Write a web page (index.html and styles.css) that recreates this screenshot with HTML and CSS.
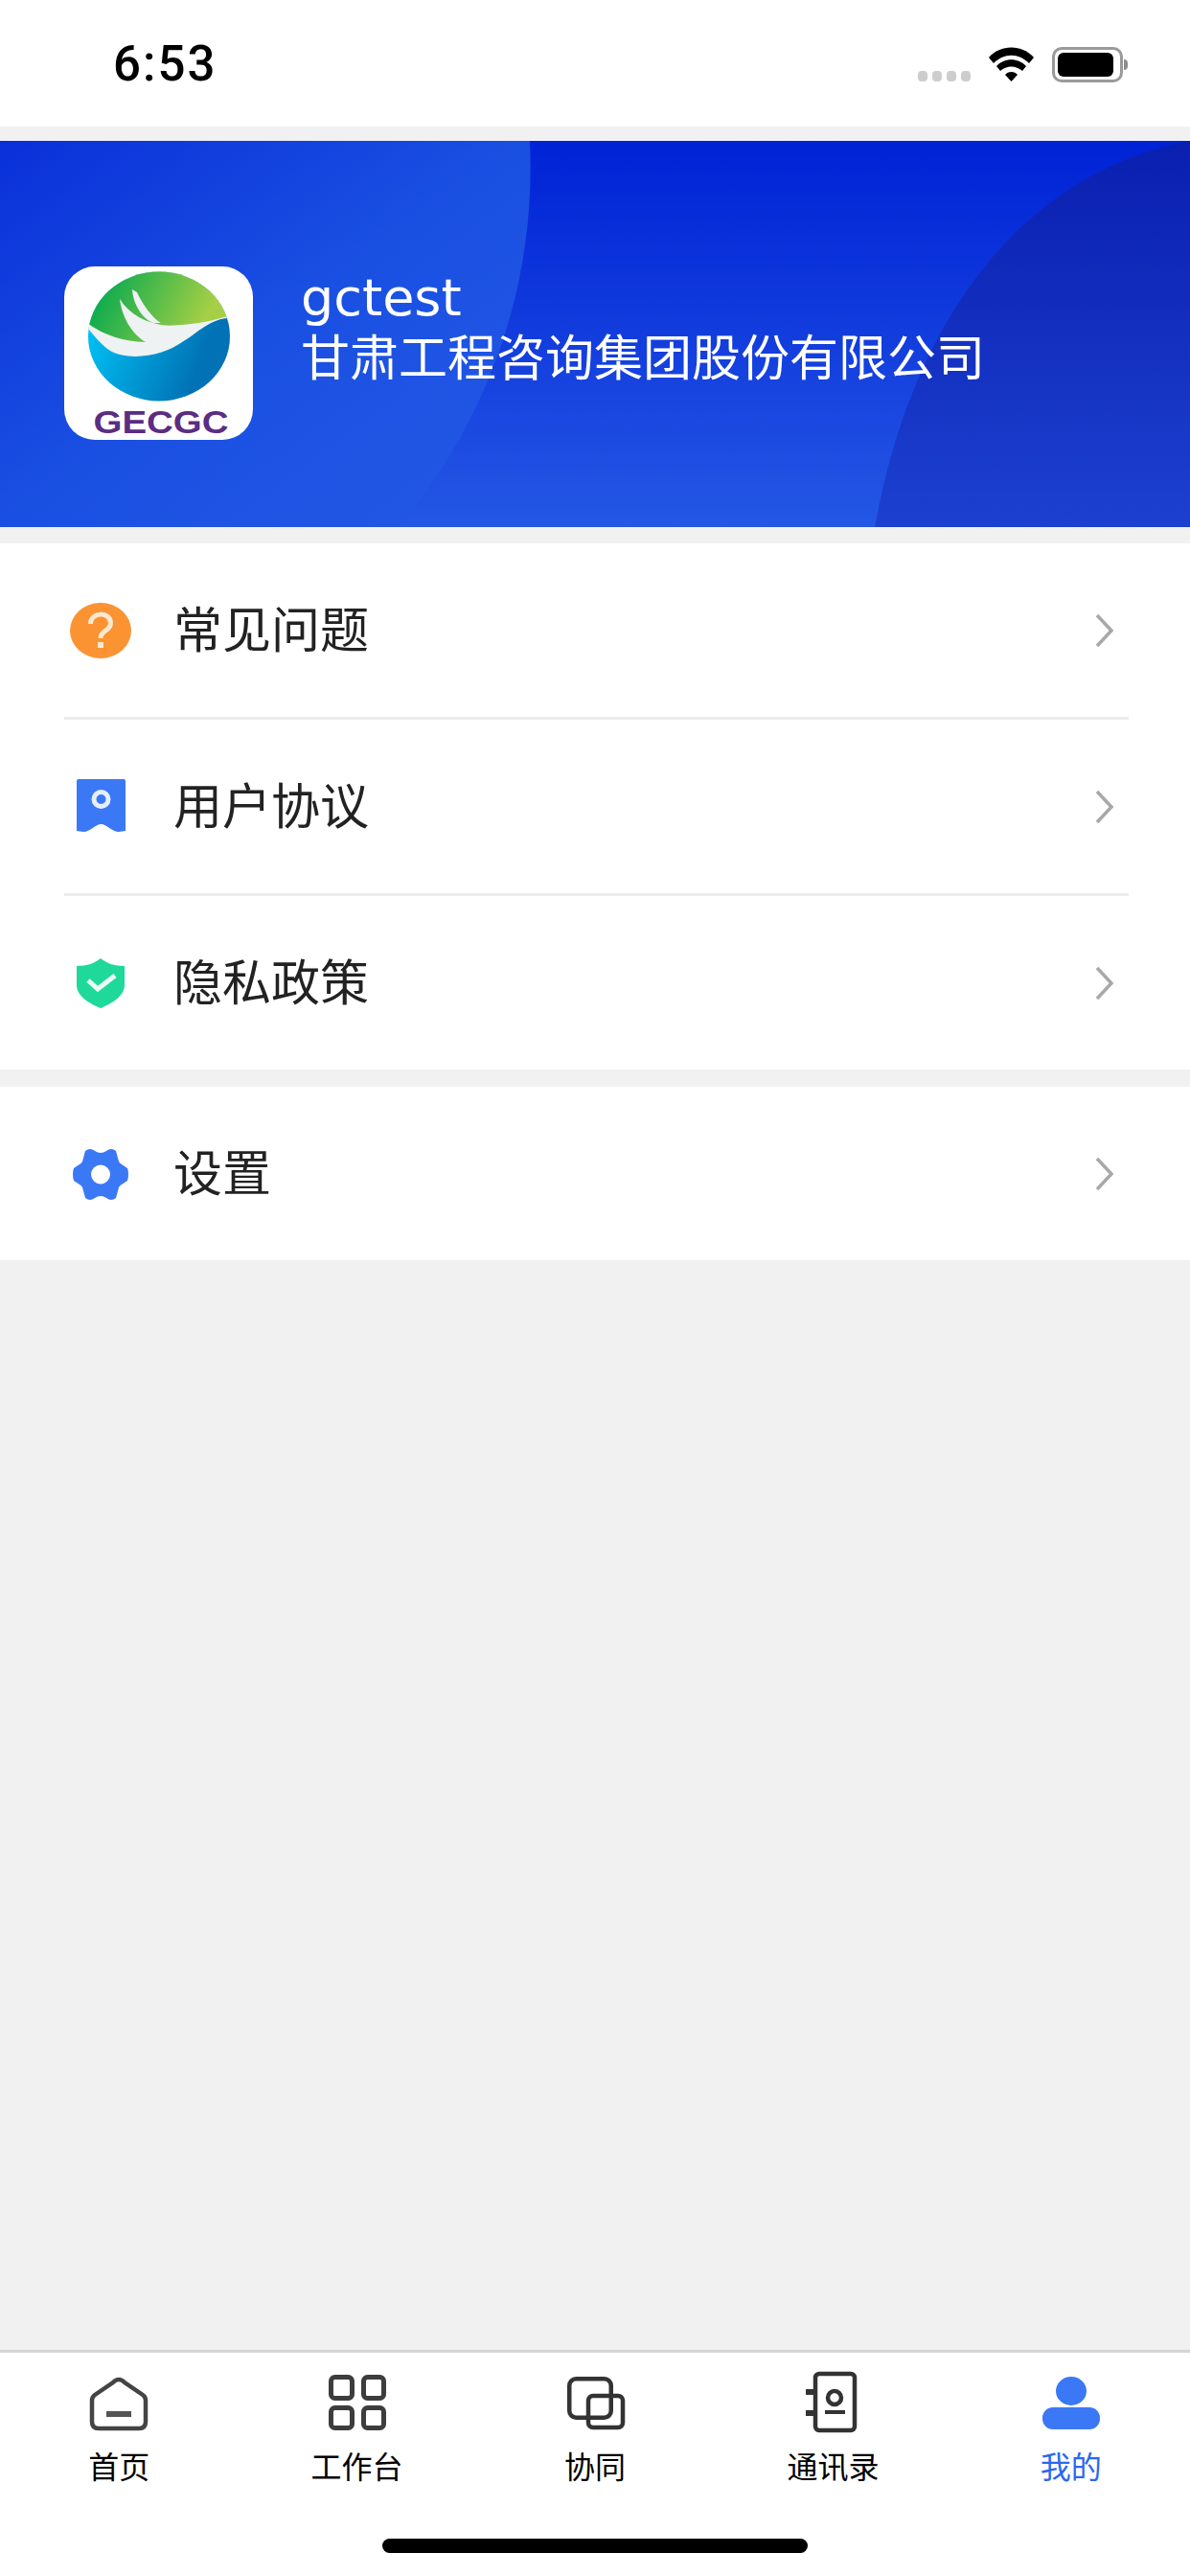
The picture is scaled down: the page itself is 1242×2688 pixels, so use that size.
FILE: index.html
```html
<!DOCTYPE html>
<html lang="zh-CN">
<head>
    <meta charset="UTF-8">
    <meta name="viewport" content="width=device-width, initial-scale=1.0">
    <title>我的</title>
    <link rel="stylesheet" href="styles.css">
</head>
<body>
    <div class="app">
        <!-- Status bar -->
        <div class="status-bar">
            <span class="status-time">6:53</span>
            <div class="status-icons">
                <div class="signal-dots"><i></i><i></i><i></i><i></i></div>
                <svg class="wifi-icon" width="47" height="36" viewBox="0 0 47 36">
                    <path d="M23.500 36 L17 29 C20 25 27 25 30 29 Z" fill="#000"/>
                    <path d="M8 20 C16 11 31 11 39 20 L35 25 C28 19 19 19 12 25 Z" fill="#000"/>
                    <path d="M0 11 C12 -3 35 -3 47 11 L42 17 C31 6 16 6 5 17 Z" fill="#000"/>
                </svg>
                <div class="battery">
                    <div class="battery-fill"></div>
                </div>
                <div class="battery-nub"></div>
            </div>
        </div>

        <!-- Profile banner -->
        <div class="banner">
            <svg class="banner-bg" width="1242" height="403" viewBox="0 0 1242 403" preserveAspectRatio="none">
                <defs>
                    <linearGradient id="bgBase" x1="0" y1="0" x2="0" y2="1">
                        <stop offset="0" stop-color="#0022d6"/>
                        <stop offset="1" stop-color="#2457e4"/>
                    </linearGradient>
                    <linearGradient id="bgLeft" x1="0" y1="0" x2="1" y2="1">
                        <stop offset="0" stop-color="#0a30d9"/>
                        <stop offset="0.5" stop-color="#1a50e2"/>
                        <stop offset="1" stop-color="#2458e5"/>
                    </linearGradient>
                    <linearGradient id="bgRight" x1="0" y1="0" x2="0" y2="1">
                        <stop offset="0" stop-color="#0a1fb0"/>
                        <stop offset="1" stop-color="#1c40d0"/>
                    </linearGradient>
                </defs>
                <rect width="1242" height="403" fill="url(#bgBase)"/>
                <path d="M0 0 H553 C560 150 510 290 416 403 H0 Z" fill="url(#bgLeft)"/>
                <path d="M1242 0 C1080 30 955 170 913 403 H1242 Z" fill="url(#bgRight)"/>
            </svg>
            <div class="logo">
                <svg width="197" height="181" viewBox="0 0 197 181">
                    <defs>
                        <clipPath id="logoClip"><ellipse cx="99" cy="73" rx="74" ry="67.500"/></clipPath>
                        <linearGradient id="logoGreen" x1="0" y1="0" x2="1" y2="0.200">
                            <stop offset="0.2" stop-color="#00a84f"/>
                            <stop offset="0.85" stop-color="#a5cf45"/>
                        </linearGradient>
                        <linearGradient id="logoBlue" x1="0" y1="0" x2="1" y2="0.300">
                            <stop offset="0.25" stop-color="#00bff2"/>
                            <stop offset="0.85" stop-color="#0072b5"/>
                        </linearGradient>
                    </defs>
                    <g clip-path="url(#logoClip)">
                        <rect width="197" height="150" fill="url(#logoBlue)"/>
                        <path d="M0 0 H197 V50 L170 54 C150 56 136 72 123 79 C105 92 70 100 48 88 C36 80 30 70 20 60 L0 50 Z" fill="#eff2f3"/>
                        <path d="M0 0 H197 V48 L170 52 C145 60 120 62 95 62 L85 79 C60 78 40 72 20 56 L0 50 Z" fill="url(#logoGreen)"/>
                        <path d="M58 34 C60 52 70 70 85 79 L110 75 L110 62 C85 60 68 50 58 34 Z" fill="#eff2f3"/>
                        <path d="M71 24 C72 40 82 55 93 59 L101 59 C92 54 82 40 76 27 Z" fill="#eff2f3"/>
                    </g>
                    <text class="logo-text" x="101" y="174" text-anchor="middle" textLength="141" lengthAdjust="spacingAndGlyphs">GECGC</text>
                </svg>
            </div>
            <div class="user-info">
                <div class="user-name">gctest</div>
                <div class="company-name">甘肃工程咨询集团股份有限公司</div>
            </div>
        </div>

        <!-- Menus -->
        <div class="menu-group">
            <div class="menu-item">
                <svg class="menu-icon" width="64" height="64" viewBox="0 0 64 64">
                    <ellipse cx="32" cy="32" rx="32" ry="29" fill="#fb9333"/>
                    <path d="M21.500 25 C21.500 12 42.500 12 42.500 24 C42.500 33 32 31 32 40" fill="none" stroke="#fde8d0" stroke-width="5"/>
                    <rect x="29" y="44" width="6" height="6" fill="#fde8d0"/>
                </svg>
                <span class="menu-label">常见问题</span>
                <svg class="chevron" width="20" height="36" viewBox="0 0 20 36"><path d="M2 2 L17 18 L2 34" fill="none" stroke="#a8a8a8" stroke-width="3.500"/></svg>
            </div>
            <div class="menu-item">
                <svg class="menu-icon" width="64" height="64" viewBox="0 0 64 64">
                    <path d="M7 5 Q7 3 9 3 H56 Q58 3 58 5 V57 L51 58 C44 58 38 50 32.500 50 C27 50 21 58 14 58 L7 57 Z" fill="#3b78f5"/>
                    <circle cx="32.500" cy="24" r="7.500" fill="none" stroke="#e6eefe" stroke-width="5"/>
                </svg>
                <span class="menu-label">用户协议</span>
                <svg class="chevron" width="20" height="36" viewBox="0 0 20 36"><path d="M2 2 L17 18 L2 34" fill="none" stroke="#a8a8a8" stroke-width="3.500"/></svg>
            </div>
            <div class="menu-item">
                <svg class="menu-icon" width="64" height="64" viewBox="0 0 64 64">
                    <path d="M32 6 C38 11 46 14 57 14 V34 C57 46 42 54 32 58 C22 54 7 46 7 34 V14 C18 14 26 11 32 6 Z" fill="#1fd99a"/>
                    <path d="M19 29 L29 38 L47 24" fill="none" stroke="#eafbf5" stroke-width="5"/>
                </svg>
                <span class="menu-label">隐私政策</span>
                <svg class="chevron" width="20" height="36" viewBox="0 0 20 36"><path d="M2 2 L17 18 L2 34" fill="none" stroke="#a8a8a8" stroke-width="3.500"/></svg>
            </div>
        </div>

        <div class="menu-group">
            <div class="menu-item">
                <svg class="menu-icon" width="64" height="64" viewBox="0 0 64 64">
                    <path d="M16 8 Q21 4 26 8 Q32 12 38 8 Q43 4 48 8 L51 19 Q52 21 54 22 L60 26 Q62 32 60 39 L54 43 Q52 44 51 46 L48 57 Q43 61 38 57 Q32 53 26 57 Q21 61 16 57 L13 46 Q12 44 10 43 L4 39 Q2 32 4 26 L10 22 Q12 21 13 19 Z" fill="#3b78f5"/>
                    <circle cx="32" cy="32.500" r="10" fill="#fff"/>
                </svg>
                <span class="menu-label">设置</span>
                <svg class="chevron" width="20" height="36" viewBox="0 0 20 36"><path d="M2 2 L17 18 L2 34" fill="none" stroke="#a8a8a8" stroke-width="3.500"/></svg>
            </div>
        </div>

        <div class="spacer"></div>

        <!-- Tab bar -->
        <div class="tab-bar">
            <div class="tabs">
                <div class="tab">
                    <svg width="66" height="66" viewBox="0 0 66 66">
                        <path d="M33 7 Q36 7 39 10 L58 23 Q61 25 61 29 V51 Q61 58 54 58 H12 Q5 58 5 51 V29 Q5 25 8 23 L27 10 Q30 7 33 7 Z" fill="none" stroke="#444" stroke-width="4.500"/>
                        <rect x="20" y="40" width="26" height="6" fill="#555"/>
                    </svg>
                    <span>首页</span>
                </div>
                <div class="tab">
                    <svg width="66" height="66" viewBox="0 0 66 66">
                        <g fill="none" stroke="#3d3d3d" stroke-width="5">
                            <rect x="5.500" y="4.500" width="22" height="22" rx="4"/>
                            <rect x="39.500" y="4.500" width="21" height="22" rx="4"/>
                            <rect x="5.500" y="36.500" width="22" height="21" rx="4"/>
                            <rect x="39.500" y="36.500" width="21" height="21" rx="4"/>
                        </g>
                    </svg>
                    <span>工作台</span>
                </div>
                <div class="tab">
                    <svg width="66" height="66" viewBox="0 0 66 66">
                        <g fill="none" stroke="#333" stroke-width="4.500">
                            <rect x="6.250" y="6.250" width="43.500" height="40.500" rx="7"/>
                            <rect x="26" y="24" width="36" height="33" rx="5"/>
                        </g>
                    </svg>
                    <span>协同</span>
                </div>
                <div class="tab">
                    <svg width="66" height="66" viewBox="0 0 66 66">
                        <rect x="15" y="1" width="41" height="59" rx="4" fill="none" stroke="#333" stroke-width="4.500"/>
                        <path d="M5 20 H13 M5 42 H13" stroke="#333" stroke-width="6"/>
                        <circle cx="35" cy="26" r="7" fill="none" stroke="#333" stroke-width="4.500"/>
                        <path d="M25 41 H46" stroke="#333" stroke-width="4"/>
                    </svg>
                    <span>通讯录</span>
                </div>
                <div class="tab tab-active">
                    <svg width="66" height="66" viewBox="0 0 66 66">
                        <ellipse cx="33" cy="19" rx="16" ry="15" fill="#3b78f5"/>
                        <rect x="3" y="36" width="60" height="23" rx="11" fill="#3b78f5"/>
                    </svg>
                    <span>我的</span>
                </div>
            </div>
            <div class="home-indicator"></div>
        </div>
    </div>
</body>
</html>
```

FILE: styles.css
```css
* {
    margin: 0;
    padding: 0;
    box-sizing: border-box;
}

body {
    background: #f1f1f1;
    font-family: "Noto Sans CJK SC", "Noto Sans", sans-serif;
}

.app {
    width: 1242px;
    height: 2688px;
    display: flex;
    flex-direction: column;
    overflow: hidden;
}

/* Status bar */
.status-bar {
    height: 132px;
    background: white;
    display: flex;
    justify-content: space-between;
    padding: 36px 65px 0 118px;
}

.status-time {
    font-family: Roboto, sans-serif;
    font-weight: 500;
    font-size: 51px;
    letter-spacing: 2px;
    line-height: 62px;
    color: black;
}

.status-icons {
    display: flex;
    align-items: flex-start;
    padding-top: 13px;
}

.signal-dots {
    display: flex;
    gap: 5px;
    margin: 25px 19px 0 0;
}

.signal-dots i {
    width: 10px;
    height: 11px;
    border-radius: 4px;
    background: #cdcdcd;
}

.battery {
    width: 74px;
    height: 37px;
    margin-left: 19px;
    padding: 3px 7px 3px 3px;
    border: 3px solid #9a9a9a;
    border-radius: 10px;
}

.battery-fill {
    height: 100%;
    background: black;
    border-radius: 6px;
}

.battery-nub {
    width: 4px;
    height: 11px;
    margin-top: 13px;
    margin-left: 1px;
    background: #8c8c8c;
    border-radius: 0 5px 5px 0;
}

/* Banner */
.banner {
    position: relative;
    height: 403px;
    margin-top: 15px;
    padding: 131px 0 0 67px;
    display: flex;
    align-items: flex-start;
    overflow: hidden;
}

.banner-bg {
    position: absolute;
    top: 0;
    left: 0;
}

.logo {
    position: relative;
    width: 197px;
    height: 181px;
    background: white;
    border-radius: 32px;
    overflow: hidden;
}

.logo-text {
    font-family: "Liberation Sans", sans-serif;
    font-weight: bold;
    font-size: 33px;
    fill: #5b2d83;
}

.user-info {
    position: relative;
    margin: 3px 0 0 50px;
    color: white;
}

.user-name {
    font-family: "DejaVu Sans", sans-serif;
    font-size: 54px;
    line-height: 59px;
}

.company-name {
    font-size: 51px;
    line-height: 60px;
}

/* Menu */
.menu-group {
    margin-top: 17px;
    background: white;
}

.menu-group + .menu-group {
    margin-top: 18px;
}

.menu-item {
    height: 184px;
    margin-left: 67px;
    padding-right: 15px;
    width: 1111px;
    display: flex;
    align-items: center;
    border-bottom: 3px solid #ececec;
}

.menu-group .menu-item:last-child {
    border-bottom: none;
    height: 181px;
}

.menu-icon {
    margin: 0 44px 0 6px;
}

.menu-label {
    flex: 1;
    font-size: 51px;
    padding-bottom: 8px;
    color: #222;
}

.spacer {
    flex: 1;
}

/* Tab bar */
.tab-bar {
    height: 236px;
    background: white;
    border-top: 3px solid #d5d5d5;
}

.tabs {
    display: grid;
    grid-template-columns: repeat(5, 1fr);
    padding-top: 21px;
}

.tab {
    display: flex;
    flex-direction: column;
    align-items: center;
    font-size: 32px;
    line-height: 46px;
    color: black;
}

.tab svg {
    margin-bottom: 7px;
    overflow: visible;
}

.tab-active {
    color: #2b67f0;
}

.home-indicator {
    width: 444px;
    height: 15px;
    margin: 54px auto 0;
    background: black;
    border-radius: 8px;
}
```
